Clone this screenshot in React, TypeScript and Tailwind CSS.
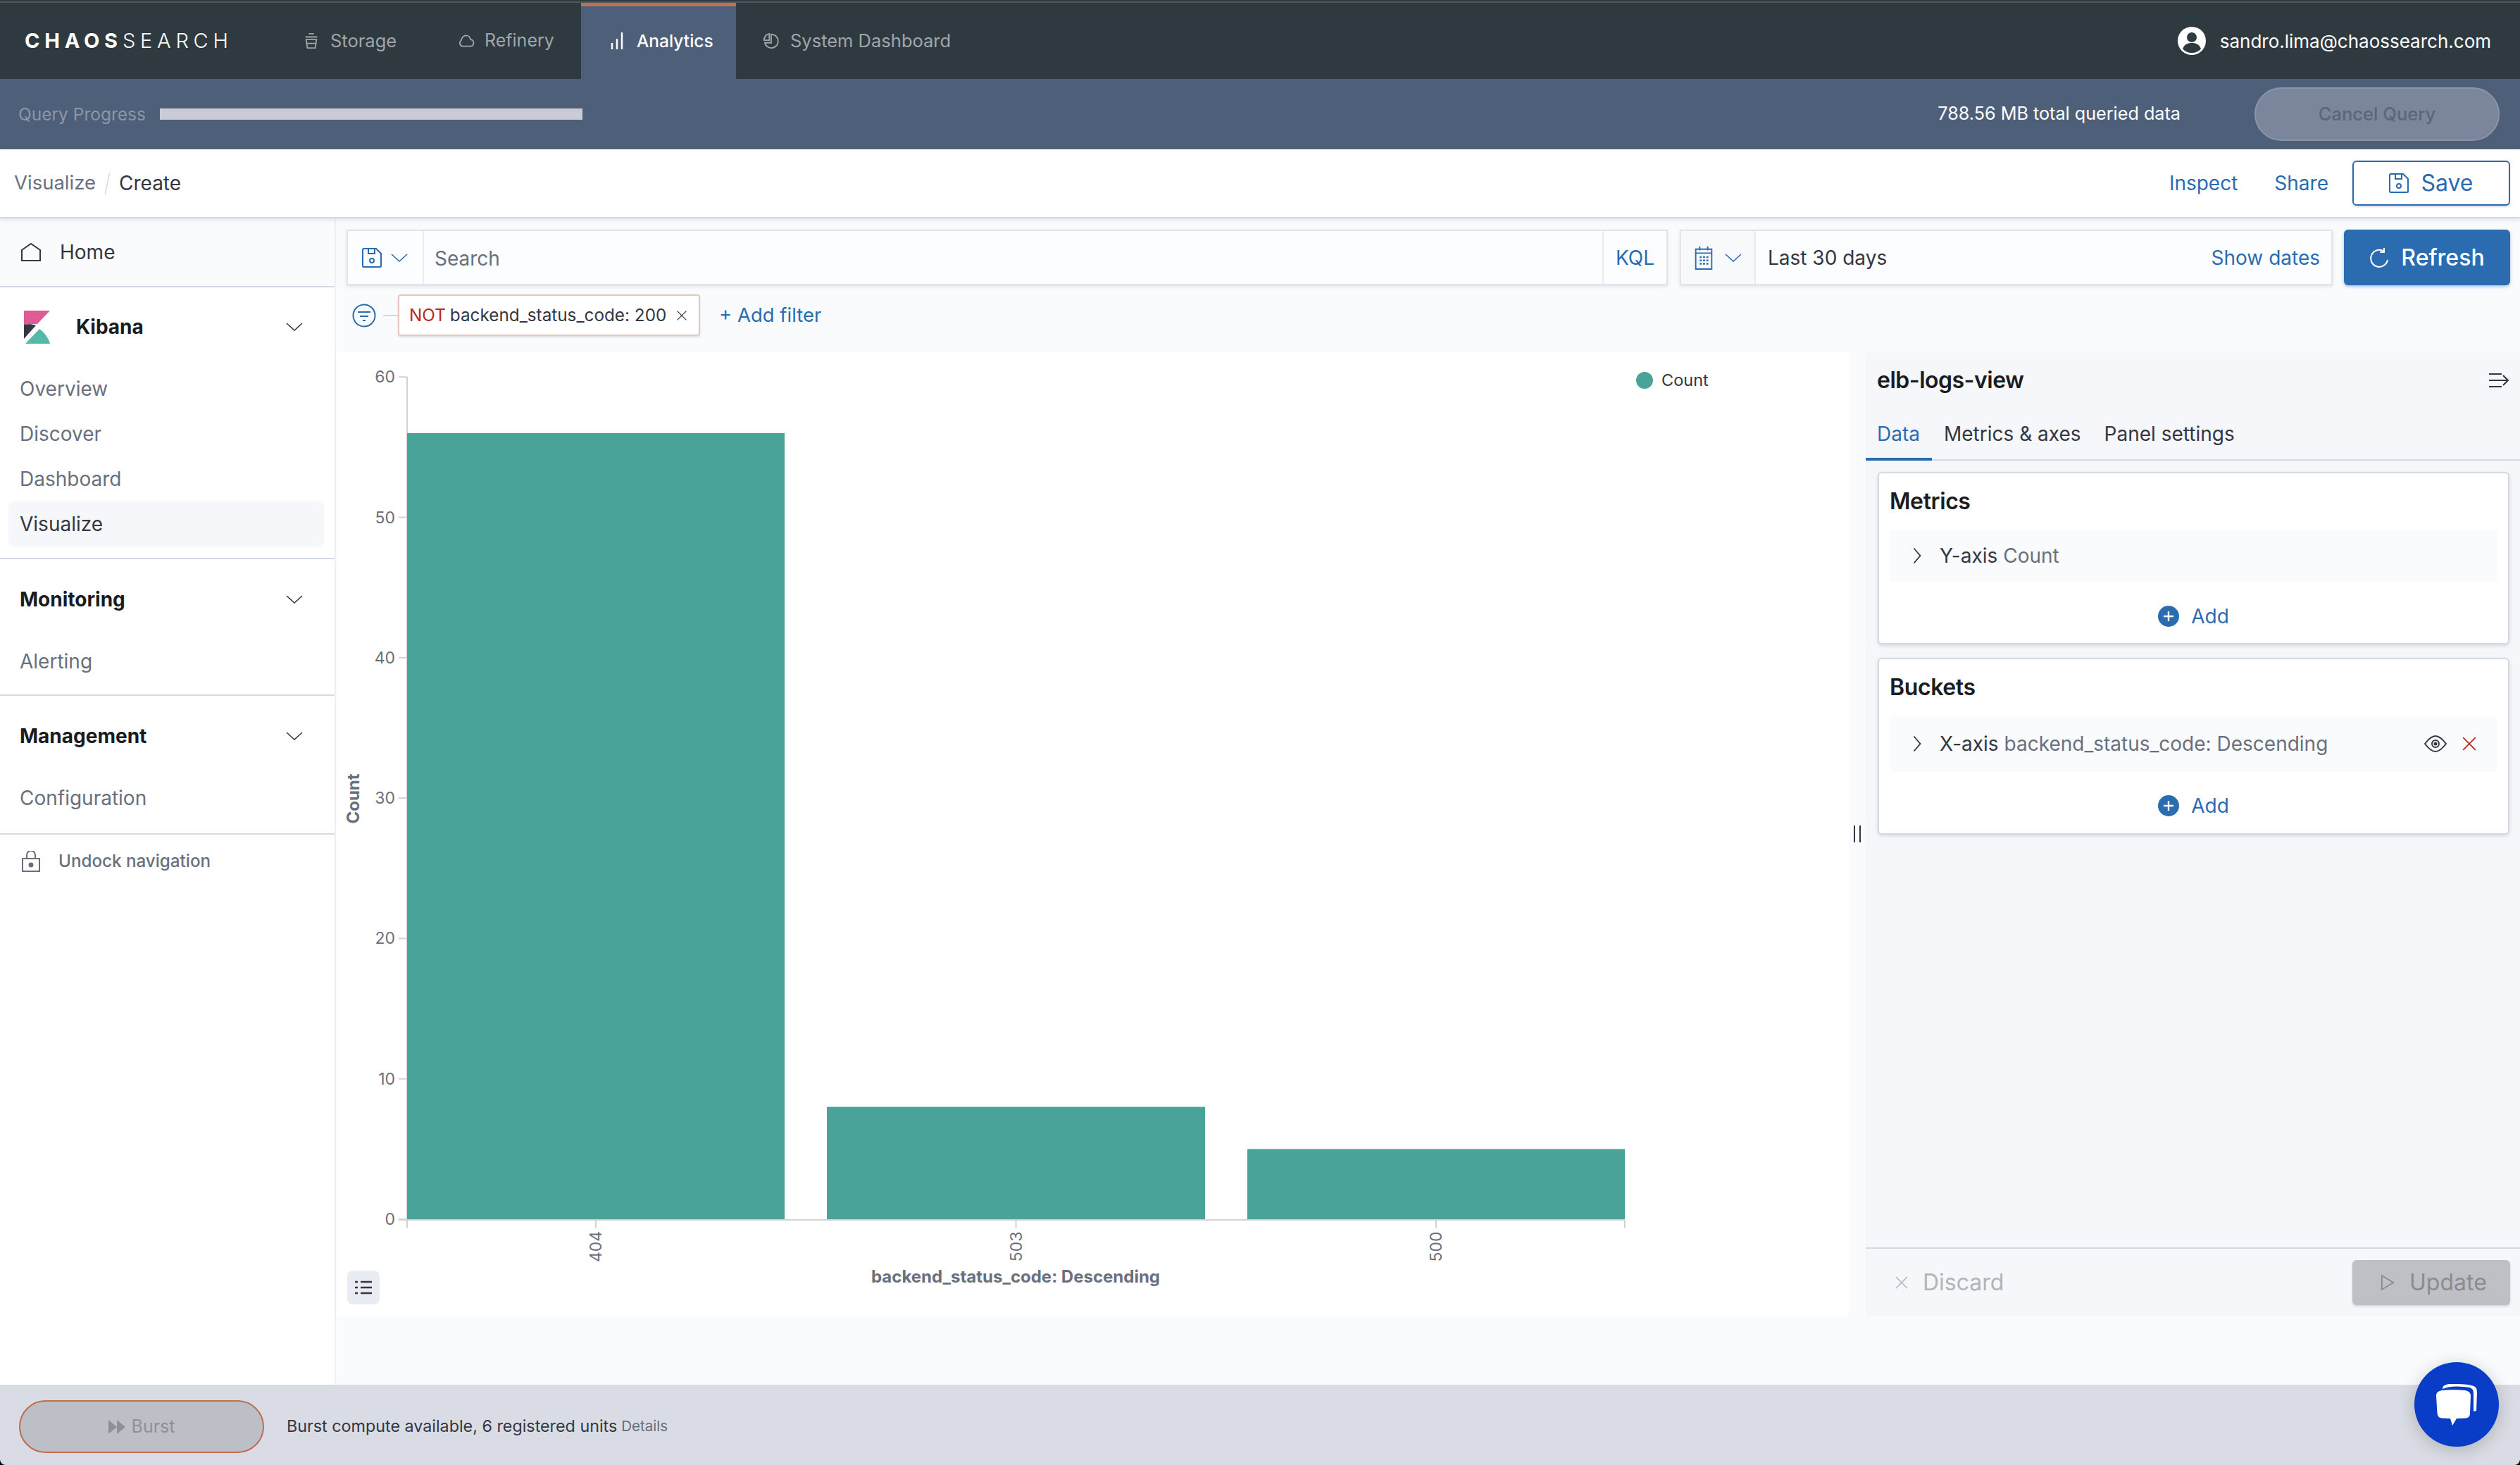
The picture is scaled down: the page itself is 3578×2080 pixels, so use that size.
const inter = 'font-["Inter",sans-serif]';

function Chevron({ className = '', dir = 'down' }: { className?: string; dir?: 'down' | 'right' }) {
  if (dir === 'right') {
    return (
      <svg viewBox="0 0 12 24" className={className} fill="none" stroke="currentColor" strokeWidth="1.8">
        <path d="M1.500 1.500l9 10.500-9 10.500" />
      </svg>
    );
  }
  return (
    <svg viewBox="0 0 24 12" className={className} fill="none" stroke="currentColor" strokeWidth="1.6">
      <path d="M1 1l11 10 11-10" />
    </svg>
  );
}

function Floppy({ className = '' }: { className?: string }) {
  return (
    <svg viewBox="0 0 28 28" className={className} fill="none" stroke="currentColor" strokeWidth="2">
      <path d="M1 2.500A1.500 1.500 0 012.500 1H20l7 7v17.500a1.500 1.500 0 01-1.500 1.500h-23A1.500 1.500 0 011 25.500z" />
      <path d="M9 1v7h9V1" />
      <circle cx="14" cy="18" r="3" />
    </svg>
  );
}

function XIcon({ className = '' }: { className?: string }) {
  return (
    <svg viewBox="0 0 20 20" className={className} fill="none" stroke="currentColor" strokeWidth="1.6">
      <path d="M2 2l16 16M18 2L2 18" />
    </svg>
  );
}

function PlusCircle() {
  return (
    <svg viewBox="0 0 30 30" className="h-[30px] w-[30px]">
      <circle cx="15" cy="15" r="15" fill="#2b6cb0" />
      <path d="M15 8v14M8 15h14" stroke="#fff" strokeWidth="2.4" />
    </svg>
  );
}

function KibanaLogo() {
  return (
    <svg viewBox="0 0 37 47" className="h-[47px] w-[37px]">
      <path d="M0 0h37L19 19C13 19 6 19 0 20z" fill="#e05a96" />
      <path d="M0 20c6-1 11-1 17 1L0 40z" fill="#343741" />
      <path d="M2 47l20-21c7 5 13 13 15 21z" fill="#55b9aa" />
    </svg>
  );
}

function NavIcon({ name }: { name: 'storage' | 'refinery' | 'analytics' | 'system' }) {
  if (name === 'storage') {
    return (
      <svg viewBox="0 0 26 26" className="h-[24px] w-[24px]" fill="none" stroke="currentColor" strokeWidth="2">
        <path d="M9 2h8M4 7h18M5 11h16l-2 13H7zM6.500 17h13" />
      </svg>
    );
  }
  if (name === 'refinery') {
    return (
      <svg viewBox="0 0 26 20" className="h-[18px] w-[24px]" fill="none" stroke="currentColor" strokeWidth="2">
        <path d="M7 18.500a5 5 0 01-2-9C6 4.500 9 1.500 13 1.500s6 3 7 6.500a5.300 5.300 0 010 10.500z" />
      </svg>
    );
  }
  if (name === 'analytics') {
    return (
      <svg viewBox="0 0 20 24" className="h-[24px] w-[20px]" fill="none" stroke="currentColor" strokeWidth="2.4">
        <path d="M3 24V15M10 24V9M17 24V0" />
      </svg>
    );
  }
  return (
    <svg viewBox="0 0 26 26" className="h-[24px] w-[24px]" fill="none" stroke="currentColor" strokeWidth="2">
      <path d="M13 3a10.500 10.500 0 11-10 13h10zM2 12A10 10 0 0110 2v10z" />
    </svg>
  );
}

function BarChart() {
  const ticks = [0, 10, 20, 30, 40, 50, 60];
  const bars = [
    { label: '404', x: 578, w: 536, v: 56 },
    { label: '503', x: 1174, w: 537, v: 8 },
    { label: '500', x: 1771, w: 536, v: 5 },
  ];
  const y = (v: number) => 1731 - v * 19.93;
  return (
    <svg viewBox="478 500 2147 1368" className="block h-full w-full" fontFamily="Inter, sans-serif">
      <path d="M578 535V1732M566 1732H2307" stroke="#d3d3d3" strokeWidth="2" fill="none" />
      {ticks.map((t) => (
        <g key={t}>
          <path d={`M566 ${y(t)}H578`} stroke="#d3d3d3" strokeWidth="2" />
          <text x="561" y={y(t) + 8} textAnchor="end" fontSize="23" fill="#69707d">{t}</text>
        </g>
      ))}
      <path d="M578 1732v12M2307 1732v12" stroke="#d3d3d3" strokeWidth="2" />
      {bars.map((b) => (
        <g key={b.label}>
          <rect x={b.x} y={y(b.v)} width={b.w} height={b.v * 19.93} fill="#4aa398" />
          <path d={`M${b.x + b.w / 2} 1732v12`} stroke="#d3d3d3" strokeWidth="2" />
          <text transform={`translate(${b.x + b.w / 2 + 8} 1770) rotate(-90)`} textAnchor="middle" fontSize="23" fill="#69707d">{b.label}</text>
        </g>
      ))}
      <text transform="translate(510 1134) rotate(-90)" textAnchor="middle" fontSize="24" fontWeight="700" fill="#69707d">Count</text>
      <text x="1442" y="1821" textAnchor="middle" fontSize="24" fontWeight="700" fill="#69707d">backend_status_code: Descending</text>
      <circle cx="2335" cy="540" r="12" fill="#4aa398" />
      <text x="2359" y="548" fontSize="23.5" fill="#343741">Count</text>
    </svg>
  );
}

function SideLink({ children, active }: { children: string; active?: boolean }) {
  return (
    <div className={`ml-3 mr-[15px] flex h-16 items-center rounded-lg px-[16px] text-[28px] ${active ? 'bg-[#f5f7fa] text-[#343741]' : 'text-[#69707d]'}`}>
      {children}
    </div>
  );
}

function SideHeading({ children }: { children: string }) {
  return (
    <div className="flex h-[113px] items-center justify-between pl-[28px] pr-[45px] text-[28px] font-bold text-[#1a1c21]">
      {children}
      <Chevron className="h-3 w-6 text-[#343741]" />
    </div>
  );
}

export default function App() {
  return (
    <div className={`flex h-[2080px] w-[3578px] flex-col overflow-hidden bg-black ${inter}`}>
      <div className="h-[2px] bg-[#303a40]" />
      <div className="h-[2px] bg-[#565656]" />

      {/* Top nav */}
      <nav className="flex h-[108px] items-stretch bg-[#2f3a40] text-[25.500px] text-[#a0a5ab]">
        <div className="flex w-[389px] items-center pl-[35px] text-[29px] tracking-[6.800px] text-white">
          <span className="font-bold">CHAOS</span>
          <span className="font-light">SEARCH</span>
        </div>
        <div className="flex w-[218px] items-center gap-[15px] pl-[41px]"><NavIcon name="storage" />Storage</div>
        <div className="flex w-[218px] items-center gap-[14px] pl-[43px] text-[25px]"><NavIcon name="refinery" />Refinery</div>
        <div className="relative flex w-[220px] items-center gap-[18px] bg-[#4e5f7a] pl-[41px] text-[24.500px] font-medium text-white">
          <div className="absolute inset-x-0 top-0 h-[5px] bg-[#bb7358]" />
          <NavIcon name="analytics" />Analytics
        </div>
        <div className="flex items-center gap-[15px] pl-[38px]"><NavIcon name="system" />System Dashboard</div>
        <div className="ml-auto flex items-center gap-[20px] pr-[41px] text-[26px] text-white">
          <svg viewBox="0 0 40 40" className="h-10 w-10">
            <circle cx="20" cy="20" r="20" fill="#fff" />
            <circle cx="20" cy="15" r="7" fill="#2f3a40" />
            <path d="M7 31c3-7 8-8 13-8s10 1 13 8c-3 4-8 6-13 6s-10-2-13-6z" fill="#2f3a40" />
          </svg>
          sandro.lima@chaossearch.com
        </div>
      </nav>

      {/* Query progress */}
      <div className="flex h-[100px] items-center bg-[#4e5f7a] text-[25.200px]">
        <span className="ml-[26px] w-[201px] shrink-0 text-[24.500px] text-[#8b96a8]">Query Progress</span>
        <div className="h-4 w-[600px] bg-[#c9ccd6]" />
        <span className="ml-auto text-white">788.56 MB total queried data</span>
        <button className="ml-[105px] mr-[29px] h-[76px] w-[348px] rounded-full border-2 border-[#8b95a8] bg-[#7b859b] text-[25.500px] font-medium text-[#5d6678]">Cancel Query</button>
      </div>

      {/* Breadcrumb bar */}
      <header className="z-10 flex h-[98px] items-center border-b-2 border-[#d3dae6] bg-white pr-[14px] text-[28px] shadow-[0_2px_6px_rgba(152,162,179,0.3)]">
        <span className="ml-[20px] text-[27.500px] text-[#69707d]">Visualize</span>
        <span className="mx-[16px] h-[31px] w-px rotate-[12deg] bg-[#c5cbd6]" />
        <span className="text-[#343741]">Create</span>
        <span className="ml-auto text-[#2b6cb0]">Inspect</span>
        <span className="ml-[52px] text-[#2b6cb0]">Share</span>
        <button className="ml-[34px] flex h-[64px] w-[224px] items-center justify-center gap-[17px] rounded-md border-2 border-[#2b6cb0] bg-white text-[32px] text-[#2b6cb0] shadow-[0_2px_3px_rgba(152,162,179,0.4)]">
          <Floppy className="h-7 w-7" />
          Save
        </button>
      </header>

      <div className="flex min-h-0 flex-1 bg-[#fafbfd]">
        {/* Sidebar */}
        <aside className="flex w-[477px] shrink-0 flex-col border-r-2 border-[#eef0f5] bg-white">
          <div className="flex h-[98px] items-center gap-[27px] border-b-2 border-[#d3dae6] bg-[#fafbfd] pl-[30px] text-[28px] text-[#343741]">
            <svg viewBox="0 0 28 28" className="h-7 w-7" fill="none" stroke="currentColor" strokeWidth="2">
              <path d="M1 11L14 2l13 9v15H1z" />
            </svg>
            Home
          </div>
          <div className="flex h-[112px] items-center pl-[34px] pr-[45px] text-[28px] font-bold text-[#1a1c21]">
            <KibanaLogo />
            <span className="ml-[37px]">Kibana</span>
            <Chevron className="ml-auto h-3 w-6 text-[#343741]" />
          </div>
          <SideLink>Overview</SideLink>
          <SideLink>Discover</SideLink>
          <SideLink>Dashboard</SideLink>
          <SideLink active>Visualize</SideLink>
          <div className="mt-[16px] border-t-2 border-[#d3dae6]">
            <SideHeading>Monitoring</SideHeading>
            <SideLink>Alerting</SideLink>
          </div>
          <div className="mt-[15px] border-t-2 border-[#d3dae6]">
            <SideHeading>Management</SideHeading>
            <SideLink>Configuration</SideLink>
          </div>
          <div className="mt-[18px] flex items-center gap-[26px] border-t-2 border-[#d3dae6] pl-[31px] pt-[20px] text-[24.200px] font-medium text-[#69707d]">
            <svg viewBox="0 0 26 30" className="h-[30px] w-[26px]" fill="none" stroke="currentColor" strokeWidth="2">
              <path d="M1 11h24v18H1zM7 11V6a6 6 0 0112 0v5" />
              <circle cx="13" cy="20" r="2.500" fill="currentColor" />
            </svg>
            Undock navigation
          </div>
        </aside>

        {/* Main */}
        <main className="flex min-w-0 flex-1 flex-col">
          <div className="mt-[16px] flex h-[79px] items-stretch pl-[15px] pr-[14px] text-[28px]">
            <div className="flex w-[1876px] border-2 border-[#e1e4ec] bg-[#fcfdfe] shadow-[0_2px_4px_rgba(152,162,179,0.25)]">
              <div className="flex w-[108px] items-center gap-[13px] border-r-2 border-[#e9ebf1] pl-[20px] text-[#2b6cb0]">
                <Floppy className="h-7 w-7" />
                <Chevron className="h-3 w-6" />
              </div>
              <span className="flex flex-1 items-center pl-[15px] pt-[3px] text-[#69707d]">Search</span>
              <span className="flex w-[91px] items-center justify-center border-l-2 border-[#e9ebf1] text-[#2b6cb0]">KQL</span>
            </div>
            <div className="ml-[17px] flex w-[927px] border-2 border-[#e1e4ec] bg-[#fcfdfe] shadow-[0_2px_4px_rgba(152,162,179,0.25)]">
              <div className="flex w-[106px] items-center gap-[16px] border-r-2 border-[#e9ebf1] bg-[#f7f9fb] pl-[18px] text-[#2b6cb0]">
                <svg viewBox="0 0 28 36" className="h-[34px] w-[28px]" fill="none" stroke="currentColor" strokeWidth="2">
                  <path d="M2 5h24v30H2zM2 11h24M8 1v6M20 1v6" />
                  <path d="M8 17h3M13 17h3M18 17h3M8 22h3M13 22h3M18 22h3M8 27h3M13 27h3M18 27h3" strokeWidth="2.500" />
                </svg>
                <Chevron className="h-3 w-6" />
              </div>
              <span className="flex items-center pl-[17px] text-[#343741]">Last 30 days</span>
              <span className="ml-auto flex items-center pr-[16px] text-[#2b6cb0]">Show dates</span>
            </div>
            <button className="ml-4 flex w-[236px] items-center justify-center gap-[17px] rounded-md bg-[#2b6cb0] text-[32px] font-medium text-white shadow-[0_2px_4px_rgba(43,108,176,0.4)]">
              <svg viewBox="0 0 28 28" className="h-7 w-7" fill="none" stroke="currentColor" strokeWidth="2">
                <path d="M21 5A12 12 0 1026 17M21 0v6h-6" />
              </svg>
              Refresh
            </button>
          </div>

          {/* Filter row */}
          <div className="flex h-[95px] items-start pl-[23px] pt-[13px] text-[24.300px]">
            <div className="flex h-[59px] items-center">
              <svg viewBox="0 0 34 34" className="h-[34px] w-[34px] text-[#2b6cb0]" fill="none" stroke="currentColor" strokeWidth="2">
                <circle cx="17" cy="17" r="15.500" />
                <path d="M8 12h18M11 18h12M15 24h4" />
              </svg>
              <div className="ml-[10px] h-[2px] w-[21px] bg-[#d3dae6]" />
              <div className="flex h-[59px] w-[429px] items-center whitespace-nowrap rounded border-2 border-[#e6c6c1] bg-white pl-[14px] text-[#343741] shadow-[0_2px_3px_rgba(152,162,179,0.3)]">
                <span className="text-[#bd271e]">NOT</span>
                <span className="ml-[6px]">backend_status_code: 200</span>
                <XIcon className="ml-[14px] h-[16px] w-[16px] text-[#343741]" />
              </div>
              <span className="ml-[27px] text-[27.500px] text-[#2b6cb0]">+ Add filter</span>
            </div>
          </div>

          {/* Editor */}
          <div className="flex h-[1368px] pl-[1px]">
            <div className="relative w-[2147px] bg-white">
              <BarChart />
              <button className="absolute bottom-[16px] left-[15px] flex h-[48px] w-[46px] items-center justify-center rounded-lg bg-[#e9edf3]">
                <svg viewBox="0 0 26 22" className="h-[22px] w-[26px]" fill="none" stroke="#343741" strokeWidth="2.400">
                  <path d="M1 3h4M9 3h16M1 11h4M9 11h16M1 19h4M9 19h16" />
                </svg>
              </button>
            </div>
            <div className="relative w-[24px]">
              <div className="absolute left-[7px] top-[672px] h-[24px] w-[10px] border-x-2 border-[#343741]" />
            </div>
            <div className="flex w-[929px] flex-col bg-[#f5f7fa]">
              <div className="flex h-[80px] items-center justify-between pl-[16px] pr-[15px] text-[32px] font-semibold tracking-[-0.500px] text-[#1a1c21]">
                elb-logs-view
                <svg viewBox="0 0 30 22" className="h-[22px] w-[30px] text-[#343741]" fill="none" stroke="currentColor" strokeWidth="2">
                  <path d="M1 2h18M1 11h26M1 20h18M21 4l7 7-7 7" />
                </svg>
              </div>
              <div className="flex h-[74px] items-center border-b-2 border-[#d3dae6] pl-[16px] text-[28px] text-[#343741]">
                <div className="relative flex h-full items-center text-[#2b6cb0]">
                  Data
                  <div className="absolute -bottom-[2px] -left-[16px] -right-[17px] h-[4px] bg-[#2b6cb0]" />
                </div>
                <span className="ml-[34px]">Metrics &amp; axes</span>
                <span className="ml-[33px]">Panel settings</span>
              </div>

              <div className="flex flex-1 flex-col gap-[19px] pl-[17px] pr-[15px] pt-[16px]">
                <section className="h-[245px] rounded-md border-2 border-[#d3dae6] bg-white px-[15px] shadow-[0_2px_4px_rgba(152,162,179,0.35)]">
                  <h3 className="flex h-[80px] items-center text-[32px] font-semibold tracking-[-0.400px] text-[#1a1c21]">Metrics</h3>
                  <div className="flex h-[74px] items-center rounded-md bg-[#fafbfd] pl-[33px] text-[28px] text-[#343741]">
                    <Chevron dir="right" className="h-[24px] w-[12px]" />
                    <span className="ml-[26px]">Y-axis</span>
                    <span className="ml-[8px] text-[#69707d]">Count</span>
                  </div>
                  <div className="flex h-[87px] items-center justify-center gap-[17px] pt-[10px] text-[28px] text-[#2b6cb0]"><PlusCircle />Add</div>
                </section>
                <section className="h-[251px] rounded-md border-2 border-[#d3dae6] bg-white px-[15px] shadow-[0_2px_4px_rgba(152,162,179,0.35)]">
                  <h3 className="flex h-[80px] items-center text-[32px] font-semibold tracking-[-0.400px] text-[#1a1c21]">Buckets</h3>
                  <div className="flex h-[80px] items-center rounded-md bg-[#fafbfd] pl-[33px] pr-[29px] text-[28px] text-[#343741]">
                    <Chevron dir="right" className="h-[24px] w-[12px]" />
                    <span className="ml-[26px]">X-axis</span>
                    <span className="ml-[8px] text-[#69707d]">backend_status_code: Descending</span>
                    <svg viewBox="0 0 32 24" className="ml-auto h-[24px] w-[32px]" fill="none" stroke="#343741" strokeWidth="2">
                      <path d="M1 12C7 4 11 1 16 1s9 3 15 11c-6 8-10 11-15 11S7 20 1 12z" />
                      <circle cx="16" cy="12" r="5" />
                      <circle cx="16" cy="12" r="1.500" fill="#343741" />
                    </svg>
                    <XIcon className="ml-[21px] h-[22px] w-[22px] text-[#bd271e]" />
                  </div>
                  <div className="flex h-[87px] items-center justify-center gap-[17px] pt-[8px] text-[28px] text-[#2b6cb0]"><PlusCircle />Add</div>
                </section>
              </div>

              <div className="flex h-[97px] items-center justify-between border-t-2 border-[#d3dae6] pl-[41px] pr-[14px] text-[32px]">
                <div className="flex items-center gap-[20px] text-[#b2b4b9]">
                  <XIcon className="h-[20px] w-[20px]" />
                  Discard
                </div>
                <button className="flex h-[64px] w-[224px] items-center gap-[21px] rounded-md bg-[#bfc0c5] pl-[40px] text-[#8b8c92] shadow-[0_2px_3px_rgba(152,162,179,0.4)]">
                  <svg viewBox="0 0 22 26" className="h-[24px] w-[20px]" fill="none" stroke="currentColor" strokeWidth="2">
                    <path d="M2 2l18 11L2 24z" />
                  </svg>
                  Update
                </button>
              </div>
            </div>
          </div>
        </main>
      </div>

      {/* Burst bar */}
      <footer className="relative flex h-[114px] shrink-0 items-center rounded-b-[8px] bg-[#d9dce4] pt-[5px] text-[23.300px]">
        <button className="ml-[27px] flex h-[75px] w-[348px] items-center justify-center gap-[9px] rounded-full border-2 border-[#c06c4f] bg-[#bdbfc7] text-[25px] text-[#8e9098]">
          <svg viewBox="0 0 24 20" className="h-[20px] w-[24px]" fill="currentColor">
            <path d="M0 0l12 10L0 20zM12 0l12 10-12 10z" />
          </svg>
          Burst
        </button>
        <span className="ml-[32px] text-[#343741]">Burst compute available, 6 registered units</span>
        <span className="ml-[6px] text-[20.500px] text-[#6b6d75]">Details</span>
        <div className="absolute right-[30px] top-[-32px] flex h-[120px] w-[120px] items-center justify-center rounded-full bg-[#0a3dc7] shadow-[0_4px_24px_rgba(0,0,0,0.2)]">
          <svg viewBox="0 0 58 59" className="h-[59px] w-[58px]" fill="#fff">
            <path d="M9 7C9 2 14 0 20 0c10 0 22 0 30 2 6 1 8 4 8 10l-1 26-4 1V14c0-8-3-9-13-10C28 3 18 3 9 7z" />
            <path d="M8 9c10-1 24-1 33 0 5 1 8 3 8 8l-1 24c0 5-2 7-6 7.500L29 49l-6 10-3-10-12-.5c-4-.5-6-2.500-6.500-7.500L0 17c0-5 3-7 8-8z" />
          </svg>
        </div>
      </footer>
    </div>
  );
}
